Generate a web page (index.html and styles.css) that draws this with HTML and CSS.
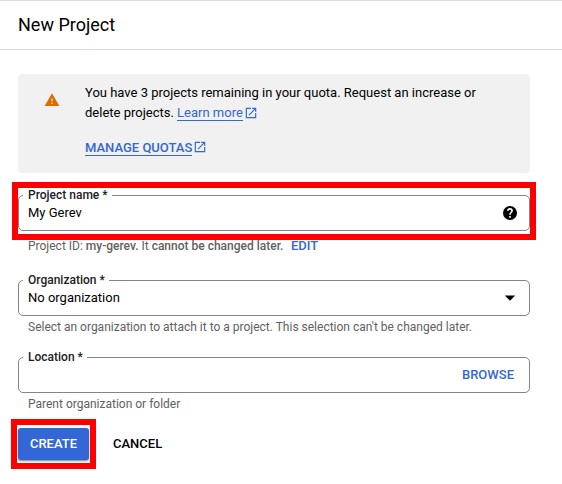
FILE: index.html
```html
<!DOCTYPE html>
<html lang="en">
<head>
<meta charset="utf-8">
<title>New Project</title>
<link rel="stylesheet" href="styles.css">
</head>
<body>
<header class="header"><h1 class="title">New Project</h1></header>
<main class="form">
  <section class="notice">
    <svg class="warn" width="16" height="16" viewBox="0 0 24 24"><path fill="#e06c00" d="M1 21h22L12 2 1 21zm12-3h-2v-2h2v2zm0-4h-2v-4h2v4z"/></svg>
    <div class="notice-body">
      <p class="notice-text">You have 3 projects remaining in your quota. Request an increase or<br>delete projects. <a class="link">Learn more</a><svg class="ext" width="14" height="14" viewBox="0 0 24 24"><path fill="#3367d6" d="M19 19H5V5h7V3H3v18h18v-9h-2v7zM14 3v2h3.600l-9.800 9.800 1.400 1.400L19 6.400V10h2V3h-7z"/></svg></p>
      <p class="notice-text quotas"><a class="link strong">MANAGE QUOTAS</a><svg class="ext" width="14" height="14" viewBox="0 0 24 24"><path fill="#3367d6" d="M19 19H5V5h7V3H3v18h18v-9h-2v7zM14 3v2h3.600l-9.800 9.800 1.400 1.400L19 6.400V10h2V3h-7z"/></svg></p>
    </div>
  </section>

  <div class="field marked">
    <label class="label">Project name *</label>
    <span class="value">My Gerev</span>
    <svg width="16" height="16" viewBox="0 0 24 24"><circle cx="12" cy="12" r="10.500"/><path fill="#fff" d="M13.200 19h-2.400v-2.400h2.400zM15.500 10.700l-.95.97c-.8.8-1.250 1.430-1.250 3.130h-2.500v-.5c0-1.100.45-2.100 1.170-2.830l1.240-1.260c.37-.36.59-.86.59-1.410a1.800 1.800 0 0 0-3.600 0H7.700a4.300 4.300 0 0 1 8.600 0c0 .74-.3 1.410-.8 1.900z"/></svg>
  </div>
  <p class="hint hint-id">Project ID: <b>my-gerev.</b> It <b>cannot be changed later.</b><a class="edit">EDIT</a></p>

  <div class="field">
    <label class="label">Organization *</label>
    <span class="value">No organization</span>
    <svg width="16" height="16" viewBox="0 0 16 16"><path d="M2.800 5.500h10.400L8 10.700z"/></svg>
  </div>
  <p class="hint hint-org">Select an organization to attach it to a project. This selection can't be changed later.</p>

  <div class="field">
    <label class="label">Location *</label>
    <span class="value"></span>
    <a class="browse">BROWSE</a>
  </div>
  <p class="hint hint-loc">Parent organization or folder</p>

  <div class="actions">
    <div class="create-wrap"><button class="create">CREATE</button></div>
    <button class="cancel">CANCEL</button>
  </div>
</main>
</body>
</html>
```

FILE: styles.css
```css
* { box-sizing: border-box; }
body {
  margin: 0;
  background: #fff;
  color: #000;
  font: 13px/20px Roboto, sans-serif;
}
p, h1 { margin: 0; }
.header {
  height: 50px;
  padding: 0 18px;
  border-top: 1px solid #dadce0;
  border-bottom: 1px solid #dadce0;
}
.title { font-size: 18px; font-weight: 400; line-height: 48px; }
.form { width: 530px; padding: 24px 0 0 18px; }
.notice {
  display: flex;
  height: 99px;
  margin-bottom: 23px;
  padding: 9px 0 0 26px;
  border-radius: 4px;
  background: #f1f1f1;
}
.warn { margin: 9px 25px 0 0; }
.notice-text { white-space: nowrap; }
.quotas { margin-top: 15px; }
.link { color: #3367d6; border-bottom: 1px solid #3367d6; }
.strong, b, .edit, .browse { font-weight: 500; }
.ext { margin-left: 1.5px; vertical-align: -3px; }
.quotas .ext { margin-left: 1px; vertical-align: -2px; }
.field {
  position: relative;
  display: flex;
  align-items: center;
  justify-content: space-between;
  height: 36px;
  margin-top: -1px;
  padding: 0 11px 0 9px;
  border: 1px solid #80868b;
  border-radius: 5px;
}
.label {
  position: absolute;
  top: -9px;
  left: 4px;
  padding: 0 4px 0 5px;
  background: #fff;
  color: #202124;
  font-size: 12px;
  font-weight: 500;
  line-height: 16px;
}
.marked::after {
  content: "";
  position: absolute;
  inset: -14px -7px -10px;
  border: 6px solid #f00;
}
.hint {
  padding-left: 10px;
  color: #616161;
  font-size: 12px;
  line-height: 16px;
  white-space: nowrap;
}
.hint-id { padding-top: 7px; height: 50px; }
.hint-org { padding-top: 3px; height: 42px; }
.hint-loc { padding-top: 3px; height: 26px; }
.edit { margin-left: 7.5px; color: #3367d6; font-size: 13px; }
.browse { margin-right: 4px; color: #3367d6; }
.actions { display: flex; align-items: center; margin-left: -7px; gap: 17px; }
.create-wrap {
  width: 85px;
  height: 50px;
  padding: 3px 0 0 1px;
  border: 6px solid #f00;
}
.create, .cancel {
  border: 0;
  padding: 0;
  background: none;
  font: 500 13px/32px Roboto, sans-serif;
}
.create {
  display: block;
  width: 71px;
  height: 32px;
  border-radius: 3px;
  background: #3367d6;
  color: #fff;
  box-shadow: 0 1px 2px rgba(0, 0, 0, .5);
}
```
